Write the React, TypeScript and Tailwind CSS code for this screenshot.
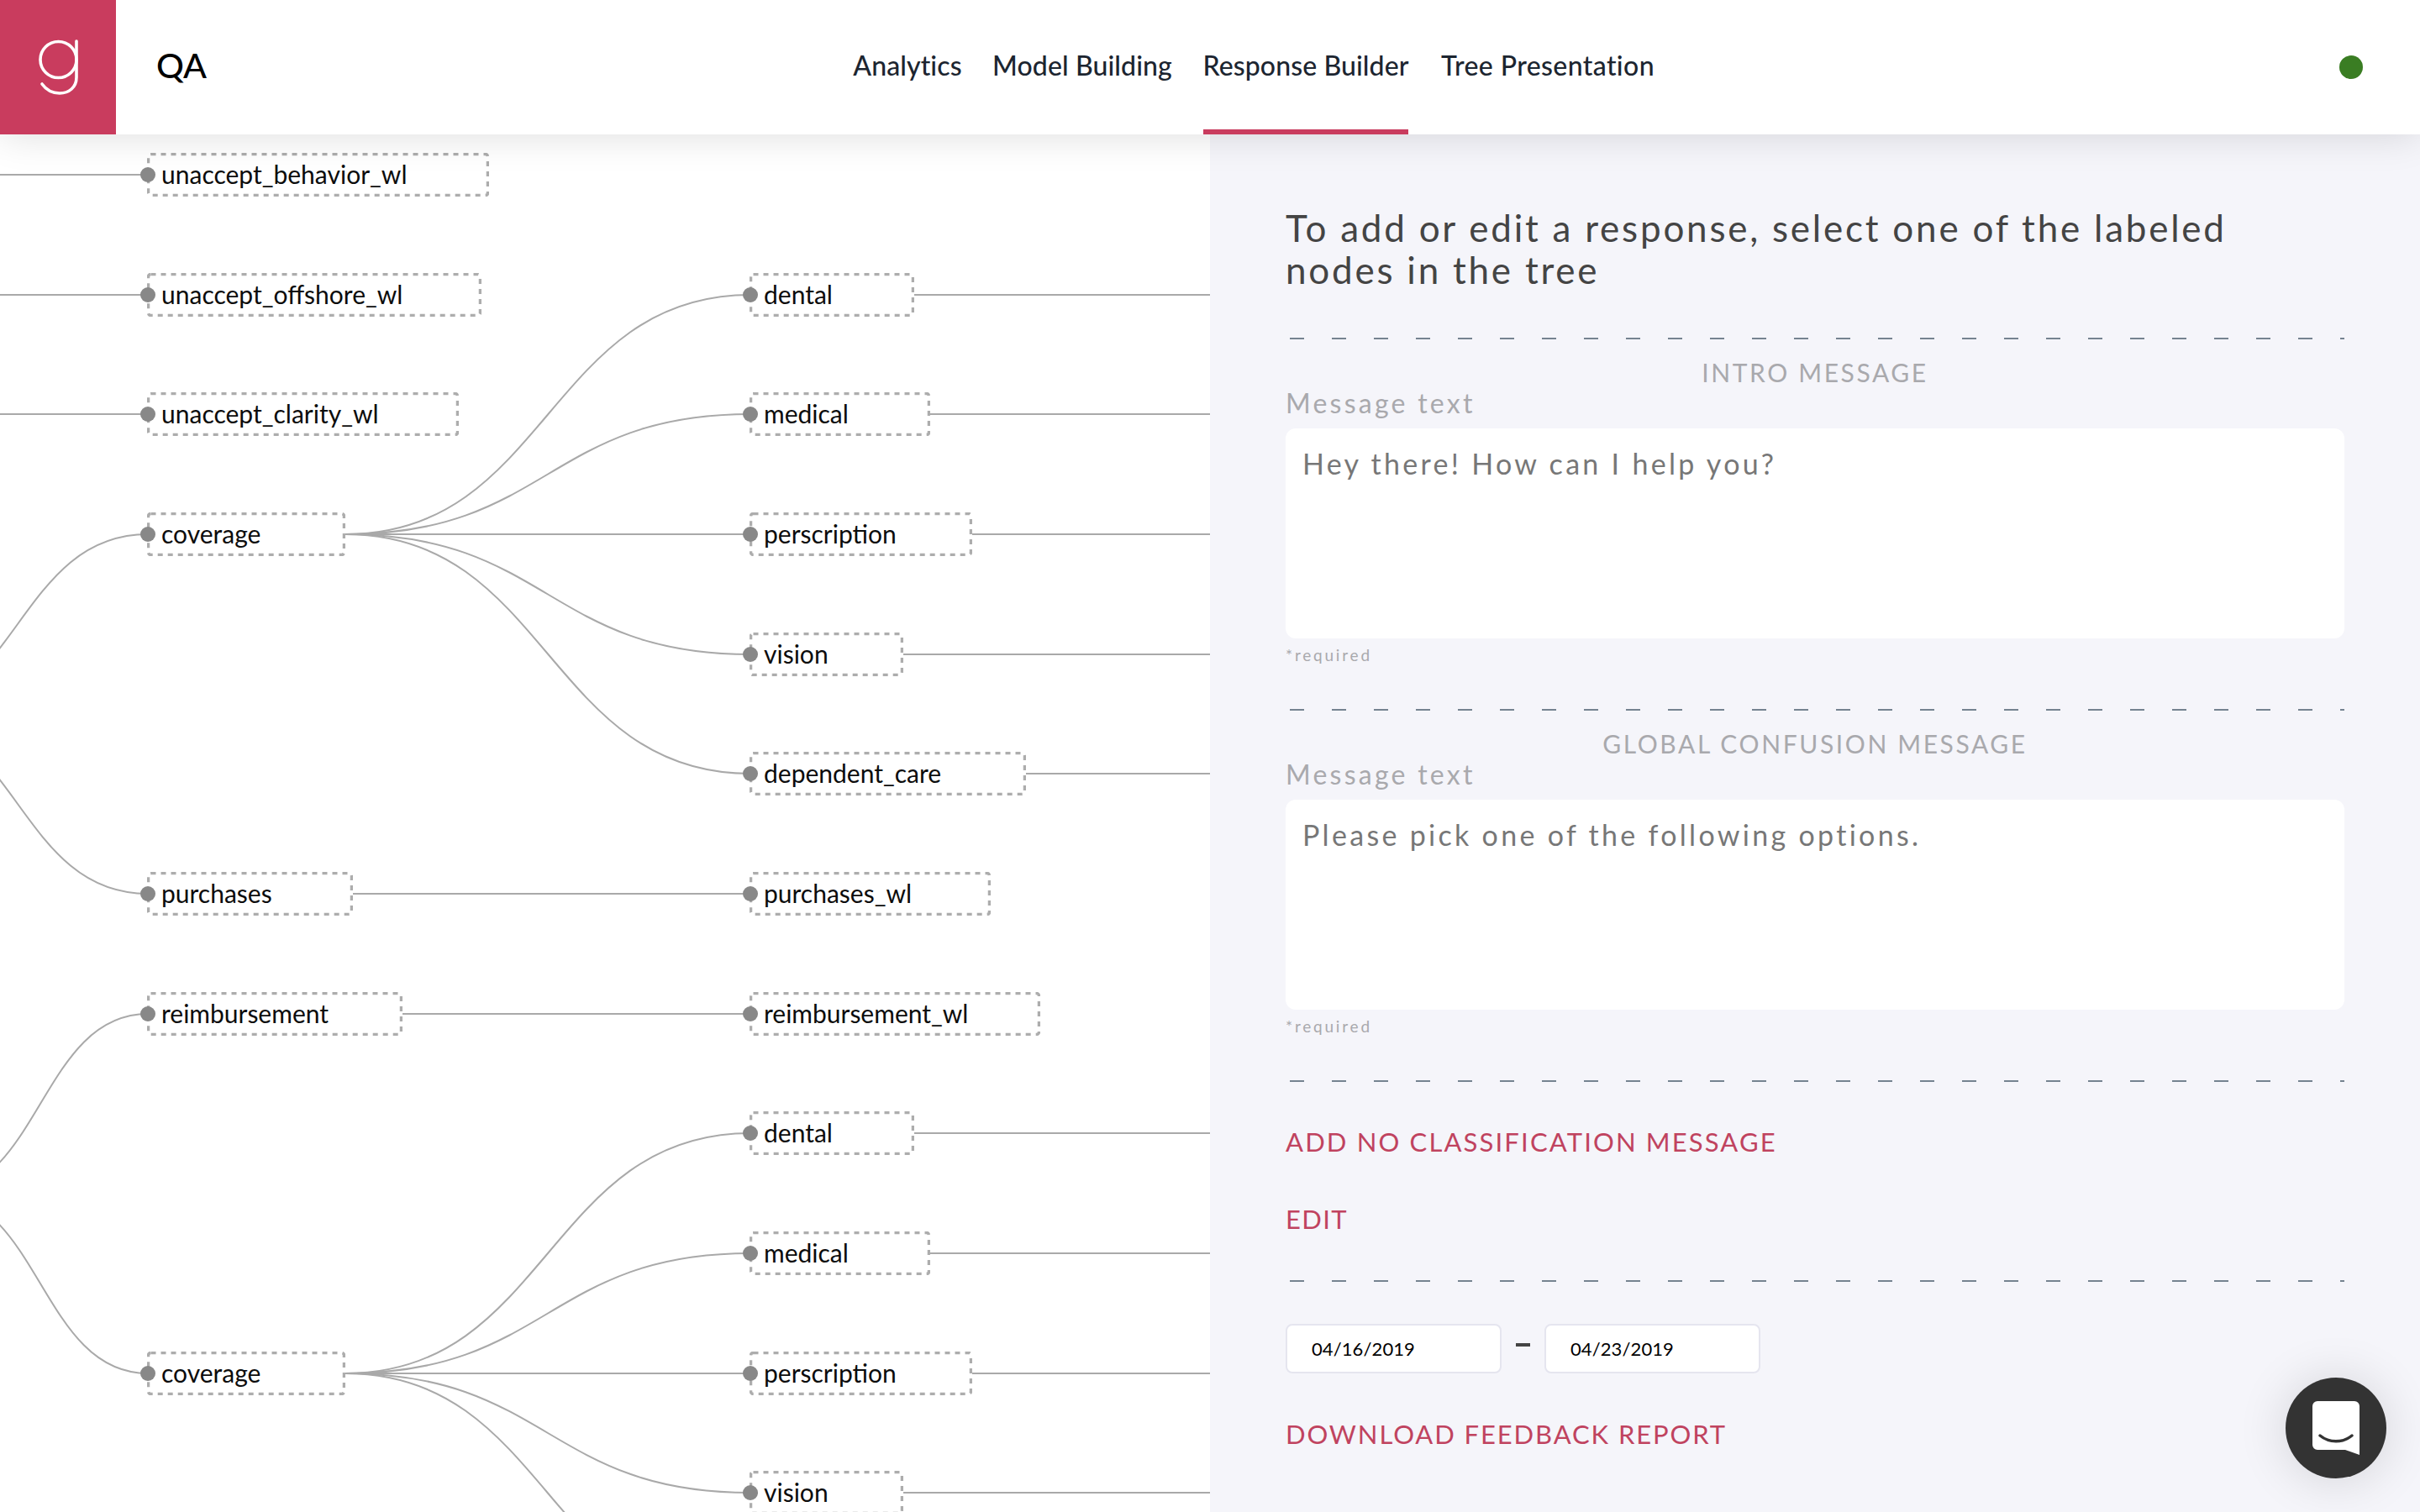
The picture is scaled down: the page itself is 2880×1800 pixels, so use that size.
import React from "react";

const F = "font-['Lato','Liberation_Sans',sans-serif]";

const rows = [208, 351, 493, 636, 779, 921, 1064, 1207, 1349, 1492, 1635, 1777, 1920];

type N = { label: string; x: number; r: number; y: number };
const col1: N[] = [
  { label: "unaccept_behavior_wl", x: 175, r: 582, y: rows[0] },
  { label: "unaccept_offshore_wl", x: 175, r: 573, y: rows[1] },
  { label: "unaccept_clarity_wl", x: 175, r: 546, y: rows[2] },
  { label: "coverage", x: 175, r: 411, y: rows[3] },
  { label: "purchases", x: 175, r: 420, y: rows[6] },
  { label: "reimbursement", x: 175, r: 479, y: rows[7] },
  { label: "coverage", x: 175, r: 411, y: rows[10] },
];
const col2: N[] = [
  { label: "dental", x: 892, r: 1088, y: rows[1] },
  { label: "medical", x: 892, r: 1107, y: rows[2] },
  { label: "perscription", x: 892, r: 1157, y: rows[3] },
  { label: "vision", x: 892, r: 1075, y: rows[4] },
  { label: "dependent_care", x: 892, r: 1221, y: rows[5] },
  { label: "purchases_wl", x: 892, r: 1179, y: rows[6] },
  { label: "reimbursement_wl", x: 892, r: 1238, y: rows[7] },
  { label: "dental", x: 892, r: 1088, y: rows[8] },
  { label: "medical", x: 892, r: 1107, y: rows[9] },
  { label: "perscription", x: 892, r: 1157, y: rows[10] },
  { label: "vision", x: 892, r: 1075, y: rows[11] },
];

const link = (x0: number, y0: number, x1: number, y1: number) => {
  const m = (x0 + x1) / 2;
  return `M${x0},${y0} C${m},${y0} ${m},${y1} ${x1},${y1}`;
};

const links: string[] = [
  `M0,${rows[0]} H176`,
  `M0,${rows[1]} H176`,
  `M0,${rows[2]} H176`,
  link(-134, 850, 176, rows[3]),
  link(-134, 850, 176, rows[6]),
  link(-80, 1421, 176, rows[7]),
  link(-80, 1421, 176, rows[10]),
  link(411, rows[3], 893, rows[1]),
  link(411, rows[3], 893, rows[2]),
  link(411, rows[3], 893, rows[3]),
  link(411, rows[3], 893, rows[4]),
  link(411, rows[3], 893, rows[5]),
  `M420,${rows[6]} H893`,
  `M479,${rows[7]} H893`,
  link(411, rows[10], 893, rows[8]),
  link(411, rows[10], 893, rows[9]),
  link(411, rows[10], 893, rows[10]),
  link(411, rows[10], 893, rows[11]),
  link(411, rows[10], 893, rows[12]),
  `M1088,${rows[1]} H1440`,
  `M1107,${rows[2]} H1440`,
  `M1157,${rows[3]} H1440`,
  `M1075,${rows[4]} H1440`,
  `M1221,${rows[5]} H1440`,
  `M1088,${rows[8]} H1440`,
  `M1107,${rows[9]} H1440`,
  `M1157,${rows[10]} H1440`,
  `M1075,${rows[11]} H1440`,
];

function Node({ n }: { n: N }) {
  const w = n.r - n.x;
  return (
    <div
      className="absolute flex h-[52px] items-center bg-white"
      style={{ left: n.x, top: n.y - 160 - 26, width: w }}
    >
      <svg className="absolute left-0 top-0" width={w} height="52" fill="none">
        <rect x="1.5" y="1.5" width={w - 3} height="49" rx="3" stroke="#adadad" strokeWidth="3.5" strokeDasharray="6 6" />
      </svg>
      <span className="absolute left-[-8px] top-[17px] h-[18px] w-[18px] rounded-full bg-[#888888]" />
      <span className="relative mb-[3px] ml-[17px] whitespace-nowrap text-[30px] leading-none text-[#0c0c0c]">{n.label}</span>
    </div>
  );
}

function Dashes({ className = "" }: { className?: string }) {
  return (
    <div
      className={`h-[2px] w-full bg-[repeating-linear-gradient(90deg,transparent_0,transparent_5px,#758390_5px,#758390_22px,transparent_22px,transparent_50px)] ${className}`}
    />
  );
}

function Section({ title, text }: { title: string; text: string }) {
  return (
    <section>
      <Dashes />
      <h3 className="mt-[19px] text-center text-[30px] font-normal leading-[40px] tracking-[2.6px] text-[#a9a9ad]">{title}</h3>
      <label className="-mt-[1px] block text-[32px] leading-[36px] tracking-[3.25px] text-[#a9a9ad]">Message text</label>
      <div className="mt-[12px] h-[250px] rounded-[12px] bg-white px-[20px] pt-[22px] text-[34px] leading-[40px] tracking-[3.3px] text-[#777777]">
        {text}
      </div>
      <p className="mt-[8px] text-[19px] leading-[24px] tracking-[2.8px] text-[#a9a9ad]">*required</p>
    </section>
  );
}

function DateBox({ value }: { value: string }) {
  return (
    <div className="flex h-[59px] w-[257px] items-center rounded-[8px] border-2 border-[#e5e5ef] bg-white pl-[29px] text-[22px] tracking-[0.1px] text-black">
      {value}
    </div>
  );
}

export default function App() {
  return (
    <div className={`flex h-[1800px] w-[2880px] flex-col overflow-hidden bg-white ${F}`}>
      <header className="relative z-10 flex h-[160px] shrink-0 items-stretch bg-white shadow-[0_0_44px_rgba(0,0,0,0.14)]">
        <div className="flex w-[138px] shrink-0 items-center justify-center bg-[#c93c5e]">
          <svg width="138" height="160" viewBox="0 0 138 160" fill="none" stroke="white" strokeWidth="3.6" strokeLinecap="round">
            <circle cx="69.5" cy="71" r="21.5" />
            <path d="M91 49 V92 C91,104 82,111 71,111 C62,111 55,107 50,100" />
          </svg>
        </div>
        <div className="flex w-[878px] shrink-0 items-center pb-[5px] pl-[48px] text-[41px] font-medium text-black">QA</div>
        <nav className="flex items-stretch gap-[40px] text-[32px] font-medium tracking-[0.1px] text-[#1c2530]">
          <a className="flex w-[128px] items-center justify-center whitespace-nowrap pb-[5px]">Analytics</a>
          <a className="flex w-[208px] items-center justify-center whitespace-nowrap pb-[5px]">Model Building</a>
          <a className="relative flex w-[244px] items-center justify-center whitespace-nowrap pb-[5px]">
            Response Builder
            <span className="absolute bottom-0 left-0 h-[6px] w-full bg-[#c93c5e]" />
          </a>
          <a className="flex w-[252px] items-center justify-center whitespace-nowrap pb-[5px] tracking-[0.4px]">Tree Presentation</a>
        </nav>
        <div className="ml-auto mr-[68px] flex items-center">
          <span className="h-[28px] w-[28px] rounded-full bg-[#3a7d23]" />
        </div>
      </header>

      <main className="flex min-h-0 flex-1">
        <div className="relative w-[1440px] shrink-0 overflow-hidden bg-white">
          <svg className="absolute left-0 top-0" width="1440" height="1640" viewBox="0 160 1440 1640" fill="none" stroke="#a9a9a9" strokeWidth="2">
            {links.map((d, i) => (
              <path key={i} d={d} />
            ))}
          </svg>
          {col1.map((n, i) => (
            <Node key={i} n={n} />
          ))}
          {col2.map((n, i) => (
            <Node key={i} n={n} />
          ))}
        </div>

        <div className="relative flex-1 bg-[#f5f5fa] px-[90px] pt-[86px]">
          <h2 className="whitespace-nowrap text-[44px] font-normal leading-[50px] tracking-[2.77px] text-[#444444]">
            To add or edit a response, select one of the labeled
            <br />
            nodes in the tree
          </h2>
          <div className="mt-[56px] flex flex-col gap-[52px]">
            <Section title="INTRO MESSAGE" text="Hey there! How can I help you?" />
            <Section title="GLOBAL CONFUSION MESSAGE" text="Please pick one of the following options." />
            <div>
              <Dashes />
              <a className="mt-[51px] block text-[31px] leading-[40px] tracking-[2.15px] text-[#c0435f]">ADD NO CLASSIFICATION MESSAGE</a>
              <a className="mt-[52px] block text-[31px] leading-[40px] tracking-[1.4px] text-[#c0435f]">EDIT</a>
              <Dashes className="mt-[53px]" />
              <div className="mt-[50px] flex items-center">
                <DateBox value="04/16/2019" />
                <span className="mx-[17px] mb-[10px] h-[4px] w-[17px] bg-[#444444]" />
                <DateBox value="04/23/2019" />
              </div>
              <a className="mt-[52px] block text-[31px] leading-[40px] tracking-[1.9px] text-[#c0435f]">DOWNLOAD FEEDBACK REPORT</a>
            </div>
          </div>
          <button className="absolute bottom-[40px] right-[40px] flex h-[120px] w-[120px] items-center justify-center rounded-full bg-[#333333] shadow-[0_2px_60px_rgba(0,0,0,0.14)]">
            <svg width="56" height="64" viewBox="0 0 56 64" fill="none">
              <path d="M6,0 H50 A6,6 0 0 1 56,6 V64 L39,58 H6 A6,6 0 0 1 0,52 V6 A6,6 0 0 1 6,0 Z" fill="white" />
              <path d="M9,41 C20,50 36,50 47,41" stroke="#333333" strokeWidth="3.4" strokeLinecap="round" />
            </svg>
          </button>
        </div>
      </main>
    </div>
  );
}
